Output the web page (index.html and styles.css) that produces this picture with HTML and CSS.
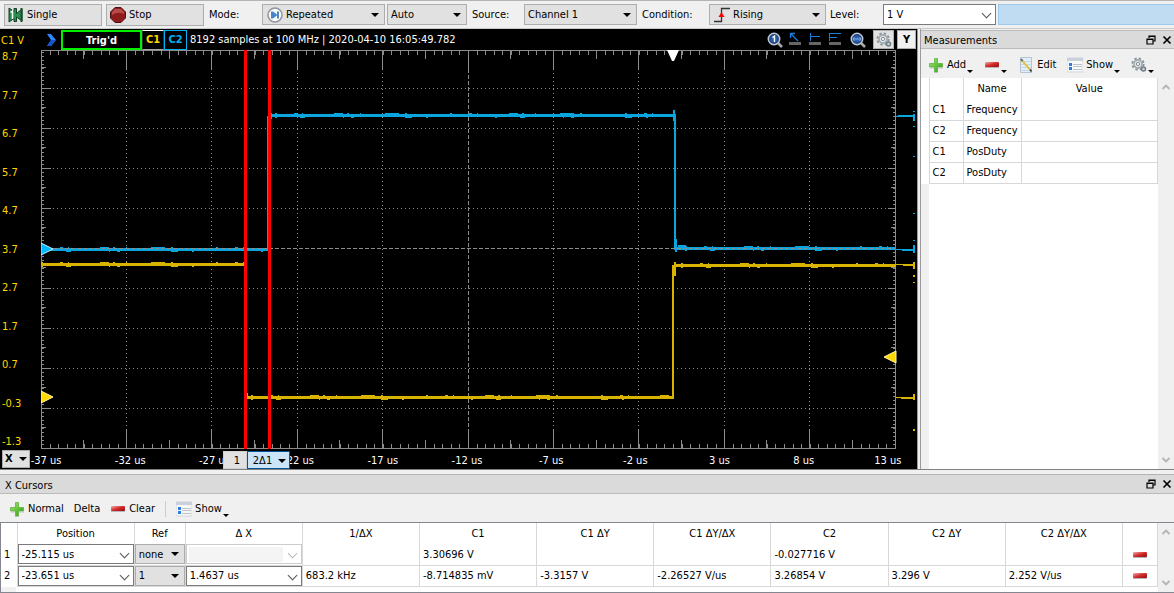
FILE: index.html
```html
<!DOCTYPE html>
<html lang="en">

<head>
	<meta charset="UTF-8">
	<meta name="viewport" content="width=device-width, initial-scale=1.0">
	<title>Scope</title>
	<link rel="stylesheet" href="styles.css">
</head>

<body>
	<!-- Shared icons -->
	<svg class="defs" aria-hidden="true">
		<defs>
			<linearGradient id="green" x1="0" y1="0" x2="1" y2="1">
				<stop offset="0" stop-color="#a4ea70" />
				<stop offset="1" stop-color="#2c9a12" />
			</linearGradient>
			<linearGradient id="red" x1="0" y1="0" x2="1" y2="1">
				<stop offset="0" stop-color="#f3b0b0" />
				<stop offset="0.5" stop-color="#d22c2c" />
				<stop offset="1" stop-color="#980c0c" />
			</linearGradient>
			<radialGradient id="lens" cx="0.5" cy="0.5" r="0.5">
				<stop offset="0" stop-color="#3d74c4" />
				<stop offset="1" stop-color="#173a78" />
			</radialGradient>
		</defs>
		<symbol id="i-plus" viewBox="0 0 16 16">
			<path d="M6.500 1.500h3v5h5v3.500h-5v5h-3v-5h-5V6.500h5z" fill="url(#green)" stroke="#5cb43e" stroke-width="0.800" />
			<path d="M2 11h4M10 11h5M6 15.500h4" stroke="#b8b8b8" stroke-width="0.800" />
		</symbol>
		<symbol id="i-minus" viewBox="0 0 16 16">
			<rect x="1" y="5" width="14" height="5" rx="1" fill="url(#red)" />
			<path d="M1 10.500h14" stroke="#b8b8b8" />
		</symbol>
		<symbol id="i-show" viewBox="0 0 16 16">
			<path d="M0 1h16v14H0z" fill="#f8f8f8" stroke="#d2d5da" />
			<path d="M0 1h16v3H0z" fill="#c9d0d9" />
			<path d="M2 6h3v3H2zM2 10h3v3H2z" fill="#2c7be0" />
			<path d="M6 7.500h9M6 9.500h9M6 12.500h9" stroke="#bcc2ca" />
		</symbol>
		<symbol id="i-edit" viewBox="0 0 16 16">
			<path d="M2.500 0.500h11v15h-11z" fill="#e4eef8" stroke="#b4c4d2" />
			<path d="M3 4.500h10M3 7.500h10M3 10.500h10M3 13.500h10" stroke="#c4d8ea" />
			<path d="M4 3.500l8 9" stroke="#e0c34a" stroke-width="2" />
			<path d="M3 2l1.500 2" stroke="#666" stroke-width="2" />
			<path d="M12 12.500l1.500 2" stroke="#333" stroke-width="1.500" />
		</symbol>
		<symbol id="i-gear" viewBox="0 0 16 16">
			<circle cx="7" cy="7" r="5.600" fill="none" stroke="#8b969c" stroke-width="2" stroke-dasharray="2.400 2" />
			<circle cx="7" cy="7" r="4" fill="#e3e8ea" stroke="#a2adb3" stroke-width="1.800" />
			<circle cx="7" cy="7" r="1.600" fill="#fff" stroke="#7d888e" />
			<circle cx="12.500" cy="12" r="2" fill="#ccd3d6" stroke="#6f7b82" stroke-width="1.400" />
		</symbol>
		<symbol id="i-zoom" viewBox="0 0 16 16">
			<path d="M11 11l4 4" stroke="#a9a9a9" stroke-width="2.500" />
			<circle cx="7" cy="7" r="5.700" fill="url(#lens)" stroke="#c0c8d2" stroke-width="1.500" />
		</symbol>
		<symbol id="i-float" viewBox="0 0 10 10">
			<path d="M3 3V1h6v5H7M3 1.500h6M1 4h6v5H1zM1 4.500h6" fill="none" stroke="#000" stroke-width="1.200" />
		</symbol>
		<symbol id="i-close" viewBox="0 0 10 10">
			<path d="M1.500 1.500l7 7M8.500 1.500l-7 7" stroke="#000" stroke-width="1.700" />
		</symbol>
		<symbol id="i-up" viewBox="0 0 10 10">
			<path d="M1.500 7L5 3.500 8.500 7" fill="none" stroke="#b4b4b4" stroke-width="1.800" />
		</symbol>
		<symbol id="i-down" viewBox="0 0 10 10">
			<path d="M1.500 3L5 6.500 8.500 3" fill="none" stroke="#b4b4b4" stroke-width="1.800" />
		</symbol>
	</svg>

	<header class="toolbar">
		<button class="tool-button">
			<svg class="icon" viewBox="0 0 16 16">
				<path d="M1 1l5 3.500V1.500h2.500v5L14 2v12l-5.500-4v4.500H6v-3L1 15z" fill="#2a8e50" stroke="#123f24" />
				<path d="M2.500 5.500l2-1.500v8" fill="none" stroke="#fff" stroke-width="1.500" />
				<path d="M13.500 1v14" stroke="#174d2c" stroke-width="2" />
			</svg>
			Single
		</button>
		<button class="tool-button">
			<svg class="icon" viewBox="0 0 16 16">
				<path d="M5 0.500h6L15.500 5v6L11 15.500H5L0.500 11V5z" fill="#8e1c1c" stroke="#4e1010" />
				<path d="M5 2h6l3 3v2Q8 4 2 8V5z" fill="#b94a4a" />
			</svg>
			Stop
		</button>
		<label class="w-mode" for="mode">Mode:</label>
		<span class="combo combo-mode">
			<svg class="icon" viewBox="0 0 16 16">
				<circle cx="8" cy="8" r="7" fill="#fafafa" stroke="#8e959c" stroke-width="1.500" />
				<path d="M5 4.500v7M11 4.500v7" stroke="#2468b4" stroke-width="1.600" />
				<path d="M6 4.500L10.500 8 6 11.500z" fill="#3b86d8" />
			</svg>
			<select id="mode">
				<option>Repeated</option>
			</select>
		</span>
		<span class="combo combo-auto">
			<select aria-label="Trigger mode">
				<option>Auto</option>
			</select>
		</span>
		<label class="w-source" for="source">Source:</label>
		<span class="combo combo-source">
			<select id="source">
				<option>Channel 1</option>
			</select>
		</span>
		<label class="w-condition" for="condition">Condition:</label>
		<span class="combo combo-condition">
			<svg class="icon" viewBox="0 0 16 16">
				<path d="M0 14.500h7.500v-13H16" fill="none" stroke="#333" stroke-width="1.300" />
				<path d="M4.500 10l3-5 3 5z" fill="#f00" />
			</svg>
			<select id="condition">
				<option>Rising</option>
			</select>
		</span>
		<label class="w-level" for="level">Level:</label>
		<span class="combo edit combo-level">
			<select id="level">
				<option>1 V</option>
			</select>
		</span>
		<div class="status"></div>
	</header>

	<main>
		<section class="scope">
			<div class="channel-name">C1 V</div>
			<div class="scope-header">
				<svg class="icon" viewBox="0 0 16 16">
					<path d="M4 2h4l5 6-5 6H4l4-6z" fill="#2f86ff" />
					<path d="M8 8l-4 6h4l5-6z" fill="#1456c8" />
				</svg>
				<span class="trigger">Trig'd</span>
				<button class="channel c1">C1</button>
				<button class="channel c2">C2</button>
				<span class="samples">8192 samples at 100 MHz | 2020-04-10 16:05:49.782</span>
				<div class="scope-tools">
					<svg class="icon" viewBox="0 0 16 16">
						<use href="#i-zoom" />
						<path d="M5.500 5.500L7.500 4v6" fill="none" stroke="#fff" stroke-width="1.300" />
					</svg>
					<svg class="icon" viewBox="0 0 16 16">
						<path d="M2 11.500h12" stroke="#666" stroke-width="3" />
						<path d="M4 2l7 7M3.500 6V1.500H8" fill="none" stroke="#1a7ee0" stroke-width="1.300" />
					</svg>
					<svg class="icon" viewBox="0 0 16 16">
						<path d="M2 11.500h12" stroke="#666" stroke-width="3" />
						<path d="M3.500 1v8M3.500 4.500H13" stroke="#1a7ee0" />
					</svg>
					<svg class="icon" viewBox="0 0 16 16">
						<path d="M2 11.500h12" stroke="#666" stroke-width="3" />
						<path d="M2.500 1v8M2.500 1.500H14M2.500 5.500H10" stroke="#1a7ee0" />
					</svg>
					<svg class="icon zoom-fit" viewBox="0 0 16 16">
						<use href="#i-zoom" />
						<path d="M3 7h8M4.500 5L3 7l1.500 2M9.500 5L11 7 9.500 9" fill="none" stroke="#7eaae8" />
					</svg>
					<button class="gear-button" aria-label="Options"><svg class="icon"><use href="#i-gear" /></svg></button>
					<button class="y-button">Y</button>
				</div>
			</div>
			<div class="y-axis">
				<span>8.7</span><span>7.7</span><span>6.7</span><span>5.7</span><span>4.7</span><span>3.7</span>
				<span>2.7</span><span>1.7</span><span>0.7</span><span>-0.3</span><span>-1.3</span>
			</div>
			<svg class="plot" viewBox="0 0 876 399" preserveAspectRatio="none">
				<!-- Grid -->
				<g class="grid">
					<path stroke-dasharray="1 3" d="M0 38.500H854M0 78.500H854M0 118.500H854M0 158.500H854M0 238.500H854M0 278.500H854M0 318.500H854M0 358.500H854" />
					<path stroke-dasharray="1 3" d="M85.500 19V380M170.500 19V380M256.500 19V380M341.500 19V380M512.500 19V380M597.500 19V380M683.500 19V380M768.500 19V380" />
					<path stroke-dasharray="4 2" d="M427.500 19V380" />
					<path d="M0.500 0V399M854.500 0V399M0 0.500H855M0 398.500H855" />
					<path d="M85.500 0V19M170.500 0V19M256.500 0V19M341.500 0V19M427.500 0V19M512.500 0V19M597.500 0V19M683.500 0V19M768.500 0V19" />
					<path d="M85.500 380V399M170.500 380V399M256.500 380V399M341.500 380V399M427.500 380V399M512.500 380V399M597.500 380V399M683.500 380V399M768.500 380V399" />
					<path d="M0 38.500H10M0 78.500H10M0 118.500H10M0 158.500H10M0 238.500H10M0 278.500H10M0 318.500H10M0 358.500H10" />
					<path d="M847 38.500H855M847 78.500H855M847 118.500H855M847 158.500H855M847 238.500H855M847 278.500H855M847 318.500H855M847 358.500H855" />
				</g>
				<!-- Ticks -->
				<g class="grid">
					<path stroke-width="4" stroke-dasharray="1 7.540" d="M0 3H855M0 396H855" />
					<path stroke-width="8" stroke-dasharray="1 84.400" d="M42.200 5H855M42.200 394H855" />
					<path stroke-width="2" stroke-dasharray="1 3" d="M2 2V399M853 2V399" />
					<path stroke-width="4" stroke-dasharray="1 39" d="M3 17V399M852 17V399" />
				</g>
				<!-- Channel 1 -->
				<g class="trace-1">
					<path d="M0 214.500H204M206 347.500H633M633 215.500H855" />
					<path class="edge" d="M632 215V349M634 212v14" />
					<path class="noise" d="M0 212.500H204M210 345.500H632M640 213.500H855" />
					<path class="low" d="M0 216.500H204M210 349.500H632M640 217.500H855" />
					<path class="edge" d="M206 343v6" />
					<path class="hair" d="M855 214.500h18M855 347.500h18" />
					<path class="edge" d="M862 215h12M860 348h13M873 212v7M873 344v6M873 225v2M873 232v1M873 379v2" />
				</g>
				<!-- Channel 2 -->
				<g class="trace-2">
					<path d="M0 199.500H227M230 65.500H633M635 198.500H855" />
					<path class="edge" d="M227 66V200M634 64V200" />
					<path class="noise" d="M0 197.500H227M234 63.500H633M644 196.500H855" />
					<path class="low" d="M0 201.500H227M234 67.500H633M644 200.500H855" />
					<path class="edge" d="M633 60v11M635 189v13M230 63v6M637 196h8" />
					<path class="hair" d="M855 66.500h18M855 199.500h18" />
					<path class="edge" d="M857 66h16M861 200h12M873 64v7M873 195v8M873 61v1M873 76v1M873 106v1M873 163v1M873 190v1" />
				</g>
				<path class="axis" d="M0 198.500H854" />
				<!-- Cursors and level markers -->
				<path class="cursor" d="M204.500 0V399M228.500 0V399" />
				<path d="M0 193l12 6-12 6z" fill="#00b8ff" stroke="#cfeeff" />
				<path d="M0 341l12 6-12 6z" fill="#ffd700" stroke="#fff4b0" />
				<path d="M855 301l-12 6 12 6z" fill="#ffd700" stroke="#fff4b0" />
				<path d="M626 0h12l-5 11h-2z" fill="#fff" />
			</svg>
			<div class="x-axis">
				<button class="x-button"><b>X</b><i class="arrow"></i></button>
				<div class="x-labels">
					<span>-37 us</span><span>-32 us</span><span>-27 us</span><span>-22 us</span><span>-17 us</span><span>-12 us</span>
					<span>-7 us</span><span>-2 us</span><span>3 us</span><span>8 us</span><span>13 us</span>
				</div>
				<div class="cursor-flags">
					<button class="flag">1</button>
					<button class="flag active">2Δ1<i class="arrow"></i></button>
				</div>
			</div>
		</section>

		<section class="panel measurements">
			<div class="panel-title">
				<h2>Measurements</h2>
				<button aria-label="Float"><svg><use href="#i-float" /></svg></button>
				<button aria-label="Close"><svg><use href="#i-close" /></svg></button>
			</div>
			<div class="panel-tools">
				<button><svg class="icon"><use href="#i-plus" /></svg>Add<i class="drop"></i></button>
				<button aria-label="Remove"><svg class="icon"><use href="#i-minus" /></svg><i class="drop"></i></button>
				<button><svg class="icon"><use href="#i-edit" /></svg>Edit</button>
				<button><svg class="icon"><use href="#i-show" /></svg>Show<i class="drop"></i></button>
				<button aria-label="Settings"><svg class="icon"><use href="#i-gear" /></svg><i class="drop"></i></button>
			</div>
			<div class="table-area">
				<table>
					<colgroup><col class="col-gutter"><col class="col-channel"><col class="col-name"><col></colgroup>
					<thead>
						<tr><th></th><th></th><th>Name</th><th>Value</th></tr>
					</thead>
					<tbody>
						<tr><td></td><td>C1</td><td>Frequency</td><td></td></tr>
						<tr><td></td><td>C2</td><td>Frequency</td><td></td></tr>
						<tr><td></td><td>C1</td><td>PosDuty</td><td></td></tr>
						<tr><td></td><td>C2</td><td>PosDuty</td><td></td></tr>
					</tbody>
				</table>
				<div class="scrollbar"><svg><use href="#i-up" /></svg><svg><use href="#i-down" /></svg></div>
			</div>
		</section>
	</main>

	<section class="panel cursors">
		<div class="panel-title">
			<h2>X Cursors</h2>
			<button aria-label="Float"><svg><use href="#i-float" /></svg></button>
			<button aria-label="Close"><svg><use href="#i-close" /></svg></button>
		</div>
		<div class="panel-tools">
			<button><svg class="icon"><use href="#i-plus" /></svg>Normal</button>
			<button>Delta</button>
			<button><svg class="icon"><use href="#i-minus" /></svg>Clear</button>
			<span class="separator"></span>
			<button><svg class="icon"><use href="#i-show" /></svg>Show<i class="drop"></i></button>
		</div>
		<div class="table-area">
			<table>
				<colgroup><col class="col-index"><col><col class="col-ref"><col><col><col><col><col><col><col><col><col class="col-remove"></colgroup>
				<thead>
					<tr>
						<th></th><th>Position</th><th>Ref</th><th>Δ X</th><th>1/ΔX</th><th>C1</th><th>C1 ΔY</th><th>C1 ΔY/ΔX</th>
						<th>C2</th><th>C2 ΔY</th><th>C2 ΔY/ΔX</th><th></th>
					</tr>
				</thead>
				<tbody>
					<tr>
						<td>1</td>
						<td class="field"><span class="combo edit"><select aria-label="Position 1"><option>-25.115 us</option></select></span></td>
						<td class="field"><span class="combo"><select aria-label="Reference 1"><option>none</option></select></span></td>
						<td class="field"><span class="combo edit disabled"><select aria-label="Delta X 1" disabled><option></option></select></span></td>
						<td></td><td>3.30696 V</td><td></td><td></td><td>-0.027716 V</td><td></td><td></td>
						<td class="remove"><button aria-label="Remove cursor 1"><svg class="icon"><use href="#i-minus" /></svg></button></td>
					</tr>
					<tr>
						<td>2</td>
						<td class="field"><span class="combo edit"><select aria-label="Position 2"><option>-23.651 us</option></select></span></td>
						<td class="field"><span class="combo"><select aria-label="Reference 2"><option>1</option></select></span></td>
						<td class="field"><span class="combo edit"><select aria-label="Delta X 2"><option>1.4637 us</option></select></span></td>
						<td>683.2 kHz</td><td>-8.714835 mV</td><td>-3.3157 V</td><td>-2.26527 V/us</td><td>3.26854 V</td><td>3.296 V</td><td>2.252 V/us</td>
						<td class="remove"><button aria-label="Remove cursor 2"><svg class="icon"><use href="#i-minus" /></svg></button></td>
					</tr>
				</tbody>
			</table>
			<div class="scrollbar"><svg><use href="#i-up" /></svg><svg><use href="#i-down" /></svg></div>
		</div>
	</section>
</body>

</html>
```
FILE: styles.css
```css
* {
	margin: 0;
	padding: 0;
	box-sizing: border-box;
}

:root {
	--window: #f0f0f0;
	--control: #e1e1e1;
	--border: #adadad;
	--line: #d8d8d8;
	--yellow: #ffd700;
	--blue: #00b0f0;
}

body {
	display: flex;
	flex-direction: column;
	min-height: 100vh;
	background: var(--window);
	color: #000;
	font-family: 'DejaVu Sans Condensed', 'DejaVu Sans', sans-serif;
	font-stretch: condensed;
	font-size: 11px;
	line-height: 14px;
}

button,
select {
	font: inherit;
	color: inherit;
	background: none;
	border: none;
	border-radius: 0;
}

.defs {
	position: absolute;
	width: 0;
	height: 0;
}

.icon {
	width: 16px;
	height: 16px;
	flex: none;
}

/* Top toolbar */
.toolbar {
	display: flex;
	align-items: center;
	height: 29px;
	padding-left: 4px;
	border-top: 1px solid #b4b4b4;
	border-bottom: 1px solid #c8c8c8;
}

.tool-button {
	display: flex;
	align-items: center;
	gap: 3px;
	width: 98px;
	height: 22px;
	margin-right: 4px;
	padding: 1px 3px 0;
	background: var(--control);
	border: 1px solid var(--border);
}

.w-mode {
	width: 54px;
	padding-left: 1px;
}

.w-source {
	width: 57px;
	padding-left: 5px;
}

.w-condition {
	width: 72px;
	padding-left: 5px;
}

.w-level {
	width: 57px;
	padding-left: 4px;
}

.combo {
	position: relative;
	display: flex;
	align-items: center;
	height: 21px;
	background: var(--control);
	border: 1px solid var(--border);
}

.combo select {
	appearance: none;
	width: 100%;
	height: 100%;
	padding: 1px 16px 0 3px;
}

.combo::after {
	content: "";
	position: absolute;
	right: 5px;
	border: 4px solid transparent;
	border-top-color: #000;
	border-bottom: none;
	pointer-events: none;
}

.combo > .icon {
	margin-left: 4px;
}

.edit {
	background: #fff;
	border-color: #7a7a7a;
}

.edit::after {
	top: 5px;
	width: 6px;
	height: 6px;
	border: none;
	border-right: 1px solid #555;
	border-bottom: 1px solid #555;
	transform: rotate(45deg);
}

.disabled {
	border-color: #ccc;
}

.disabled select {
	width: auto;
	height: 15px;
	flex: 1;
	margin: 0 18px 0 2px;
	background: var(--window);
}

.disabled::after {
	border-color: #bbb;
}

.combo-mode {
	width: 123px;
	margin-right: 2px;
}

.combo-auto {
	width: 80px;
}

.combo-source {
	width: 113px;
}

.combo-condition {
	width: 117px;
}

.combo-level {
	width: 113px;
	margin-right: 2px;
}

.status {
	flex: 1;
	height: 21px;
	background: #bfdcf2;
	border: 1px solid #9dc9ec;
	border-right: none;
}

/* Scope */
main {
	display: flex;
	flex: 1;
	border-bottom: 1px solid #808080;
}

.scope {
	flex: 1;
	min-width: 0;
	display: grid;
	grid-template-columns: 41px minmax(0, 1fr);
	grid-template-rows: 21px 1fr 20px;
	background: #000;
	color: #fff;
}

.channel-name {
	padding: 5px 1px;
	color: var(--yellow);
}

.scope-header {
	display: flex;
	align-items: center;
	padding-left: 2px;
	white-space: nowrap;
}

.trigger {
	width: 81px;
	height: 20px;
	margin-left: 2px;
	border: 2px solid #00f000;
	text-align: center;
	line-height: 17px;
	font-weight: bold;
}

.channel {
	width: 22px;
	height: 20px;
	border: 1px solid #333;
	font-weight: bold;
}

.c1 {
	color: var(--yellow);
	border-top-color: #fff;
	border-bottom-color: #aaa;
}

.c2 {
	width: 23px;
	color: var(--blue);
	border-color: var(--blue);
}

.samples {
	padding: 1px 0 0 3px;
}

.scope-tools {
	display: flex;
	align-items: center;
	gap: 4px;
	margin-left: auto;
}

.zoom-fit {
	margin-left: 3px;
}

.gear-button,
.y-button {
	display: flex;
	align-items: center;
	justify-content: center;
	width: 21px;
	height: 19px;
	background: var(--control);
	border: 1px solid var(--border);
	color: #000;
}

.gear-button {
	margin-left: 3px;
}

.y-button {
	width: 19px;
	margin: 0 1px 0 -1px;
	background: var(--window);
	font-weight: bold;
}

.y-axis {
	display: flex;
	flex-direction: column;
	justify-content: space-between;
	padding-left: 2px;
	color: var(--yellow);
}

.plot {
	width: 100%;
	height: 100%;
	min-height: 300px;
}

.grid,
.axis {
	fill: none;
	stroke: #8c8c8c;
	shape-rendering: crispEdges;
}

.axis {
	stroke-dasharray: 4 2;
}

.trace-1,
.trace-2 {
	fill: none;
	stroke: #d8b400;
	stroke-width: 3;
	shape-rendering: crispEdges;
}

.trace-2 {
	stroke: #0aa5df;
}

.edge {
	stroke-width: 2;
}

.hair,
.noise,
.low {
	stroke-width: 1;
}

.noise {
	stroke-dasharray: 2 17 3 5 1 31 9 4 2 11 1 24 14 6 2 43;
}

.low {
	stroke-dasharray: 2 23 5 38 1 7 3 51 7 14 2 67;
}

.cursor {
	stroke: #f00;
	stroke-width: 3;
	shape-rendering: crispEdges;
}

.x-axis {
	grid-column: 1 / -1;
	position: relative;
	display: flex;
	align-items: center;
	padding-left: 2px;
}

.x-button {
	display: flex;
	align-items: center;
	justify-content: space-between;
	width: 28px;
	height: 18px;
	padding: 0 2px;
	background: var(--control);
	border: 1px solid var(--border);
	color: #000;
}

.arrow {
	border: 4px solid transparent;
	border-top-color: #000;
	border-bottom: none;
}

.x-button .arrow,
.flag .arrow {
	box-shadow: -5px 0 0 -4px #999;
}

.x-labels {
	flex: 1;
	display: flex;
	justify-content: space-between;
	padding: 3px 29px 0 16px;
}

/* Zero-width boxes keep each label centred on its grid line */
.x-labels span {
	display: flex;
	justify-content: center;
	width: 0;
	white-space: nowrap;
}

/* Handles under the two cursors */
.cursor-flags {
	position: absolute;
	left: 223px;
	top: 2px;
	display: flex;
	color: #000;
}

.flag {
	display: flex;
	align-items: center;
	justify-content: center;
	width: 24px;
	height: 18px;
	padding: 1px 0 0 4px;
	background: var(--control);
	border: 1px solid #d0d0d0;
}

.flag.active {
	width: 43px;
	gap: 6px;
	padding-left: 2px;
	background: #cce4f7;
	border-color: #005499;
}

/* Docked panels */
.panel {
	display: flex;
	flex-direction: column;
}

.measurements {
	width: 257px;
	padding-top: 1px;
	border-left: 4px double #9a9aa0;
}

.cursors {
	margin-top: 4px;
	border-top: 1px solid #b4b4b4;
}

.panel-title {
	display: flex;
	align-items: center;
	gap: 4px;
	height: 19px;
	padding: 0 0 0 3px;
	background: #dadada;
	border-top: 1px solid #bbb;
	border-bottom: 1px solid #bbb;
}

.cursors .panel-title {
	border-top: none;
	padding-left: 5px;
}

.panel-title h2 {
	flex: 1;
	padding-top: 3px;
	font-size: 11px;
	font-weight: normal;
}

.panel-title button {
	width: 12px;
	height: 12px;
}

.panel-title svg {
	display: block;
	width: 10px;
	height: 10px;
}

.panel-tools {
	display: flex;
	align-items: center;
	gap: 11px;
	height: 29px;
	padding: 2px 7px 0;
}

.panel-tools button {
	display: flex;
	align-items: center;
	gap: 3px;
}

.drop {
	align-self: flex-end;
	margin-left: -2px;
	border: 3px solid transparent;
	border-top-color: #000;
	border-bottom: none;
}

.separator {
	width: 1px;
	height: 16px;
	background: #ccc;
}

.table-area {
	flex: 1;
	display: flex;
	align-items: flex-start;
	background: #fff;
}

.cursors .panel-tools {
	height: 28px;
	padding-left: 9px;
	gap: 10px;
}

.cursors .table-area {
	min-height: 71px;
	margin-bottom: 1px;
	border: 1px solid #828790;
	border-right: none;
}

/* Grey strip below the row headers */
.table-area {
	background: linear-gradient(to right, var(--window) 8px, #fff 8px);
}

.cursors .table-area {
	background: linear-gradient(to right, var(--window) 15px, #fff 15px);
}

table {
	flex: 1;
	table-layout: fixed;
	width: 0;
	background: #fff;
	border-collapse: collapse;
}

th,
td {
	height: 21px;
	border-right: 1px solid var(--line);
	white-space: nowrap;
}

th {
	font-weight: normal;
}

td {
	padding: 1px 3px 0;
	border-bottom: 1px solid var(--line);
}

td:first-child {
	border-bottom: none;
}

.col-gutter {
	width: 8px;
}

.measurements td:first-child {
	padding: 0;
}

.col-channel {
	width: 34px;
}

.col-name {
	width: 58px;
}

.col-index {
	width: 16px;
}

.col-ref {
	width: 51px;
}

.col-remove {
	width: 35px;
}

.cursors td.field {
	padding: 0;
}

.field .combo {
	height: 20px;
}

.remove button {
	display: block;
	margin: 0 auto;
	width: 16px;
	height: 16px;
}

.scrollbar {
	align-self: stretch;
	display: flex;
	flex-direction: column;
	align-items: center;
	justify-content: space-between;
	width: 16px;
	padding: 4px 0;
	background: var(--window);
}

.scrollbar svg {
	width: 10px;
	height: 10px;
}
```
